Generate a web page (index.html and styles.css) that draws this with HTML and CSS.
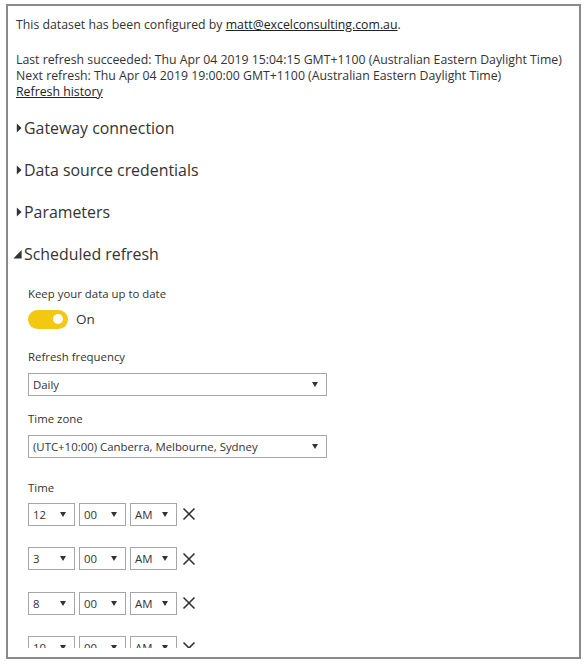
FILE: index.html
```html
<!DOCTYPE html>
<html>
<head>
<meta charset="utf-8">
<link rel="stylesheet" href="styles.css">
</head>
<body>
<div class="frame">
  <div class="scroll">
    <p class="info first">This dataset has been configured by <a class="link">matt@excelconsulting.com.au</a>.</p>
    <p class="info status">Last refresh succeeded: Thu Apr 04 2019 15:04:15 GMT+1100 (Australian Eastern Daylight Time)<br>Next refresh: Thu Apr 04 2019 19:00:00 GMT+1100 (Australian Eastern Daylight Time)<br><a class="link">Refresh history</a></p>

    <div class="sec-head"><svg class="tri" viewBox="0 0 11 10" width="11" height="10"><polygon points="3.8,0.6 8.6,5 3.8,9.4"/></svg><span>Gateway connection</span></div>
    <div class="sec-head"><svg class="tri" viewBox="0 0 11 10" width="11" height="10"><polygon points="3.8,0.6 8.6,5 3.8,9.4"/></svg><span>Data source credentials</span></div>
    <div class="sec-head"><svg class="tri" viewBox="0 0 11 10" width="11" height="10"><polygon points="3.8,0.6 8.6,5 3.8,9.4"/></svg><span>Parameters</span></div>
    <div class="sec-head open"><svg class="tri" viewBox="0 0 11 10" width="11" height="10"><polygon points="8.6,1 8.6,9.4 0.4,9.4"/></svg><span>Scheduled refresh</span></div>

    <div class="sec-body">
      <div class="field f-toggle">
        <div class="label">Keep your data up to date</div>
        <div class="toggle-row"><span class="toggle"><span class="knob"></span></span><span class="toggle-text">On</span></div>
      </div>
      <div class="field f-freq">
        <div class="label">Refresh frequency</div>
        <div class="select wide"><span>Daily</span><svg class="arrow" viewBox="0 0 6 5" width="6" height="5"><polygon points="0,0 6,0 3,5"/></svg></div>
      </div>
      <div class="field f-tz">
        <div class="label">Time zone</div>
        <div class="select wide"><span>(UTC+10:00) Canberra, Melbourne, Sydney</span><svg class="arrow" viewBox="0 0 6 5" width="6" height="5"><polygon points="0,0 6,0 3,5"/></svg></div>
      </div>
      <div class="field f-time">
        <div class="label tight">Time</div>
        <div class="time-row">
          <div class="select small"><span>12</span><svg class="arrow" viewBox="0 0 6 5" width="6" height="5"><polygon points="0,0 6,0 3,5"/></svg></div>
          <div class="select small"><span>00</span><svg class="arrow" viewBox="0 0 6 5" width="6" height="5"><polygon points="0,0 6,0 3,5"/></svg></div>
          <div class="select small"><span>AM</span><svg class="arrow" viewBox="0 0 6 5" width="6" height="5"><polygon points="0,0 6,0 3,5"/></svg></div>
          <svg class="remove" viewBox="0 0 14 14" width="14" height="14"><path d="M1.5 1.5 L12.5 12.5 M12.5 1.5 L1.5 12.5"/></svg>
        </div>
        <div class="time-row">
          <div class="select small"><span>3</span><svg class="arrow" viewBox="0 0 6 5" width="6" height="5"><polygon points="0,0 6,0 3,5"/></svg></div>
          <div class="select small"><span>00</span><svg class="arrow" viewBox="0 0 6 5" width="6" height="5"><polygon points="0,0 6,0 3,5"/></svg></div>
          <div class="select small"><span>AM</span><svg class="arrow" viewBox="0 0 6 5" width="6" height="5"><polygon points="0,0 6,0 3,5"/></svg></div>
          <svg class="remove" viewBox="0 0 14 14" width="14" height="14"><path d="M1.5 1.5 L12.5 12.5 M12.5 1.5 L1.5 12.5"/></svg>
        </div>
        <div class="time-row">
          <div class="select small"><span>8</span><svg class="arrow" viewBox="0 0 6 5" width="6" height="5"><polygon points="0,0 6,0 3,5"/></svg></div>
          <div class="select small"><span>00</span><svg class="arrow" viewBox="0 0 6 5" width="6" height="5"><polygon points="0,0 6,0 3,5"/></svg></div>
          <div class="select small"><span>AM</span><svg class="arrow" viewBox="0 0 6 5" width="6" height="5"><polygon points="0,0 6,0 3,5"/></svg></div>
          <svg class="remove" viewBox="0 0 14 14" width="14" height="14"><path d="M1.5 1.5 L12.5 12.5 M12.5 1.5 L1.5 12.5"/></svg>
        </div>
        <div class="time-row">
          <div class="select small"><span>10</span><svg class="arrow" viewBox="0 0 6 5" width="6" height="5"><polygon points="0,0 6,0 3,5"/></svg></div>
          <div class="select small"><span>00</span><svg class="arrow" viewBox="0 0 6 5" width="6" height="5"><polygon points="0,0 6,0 3,5"/></svg></div>
          <div class="select small"><span>AM</span><svg class="arrow" viewBox="0 0 6 5" width="6" height="5"><polygon points="0,0 6,0 3,5"/></svg></div>
          <svg class="remove" viewBox="0 0 14 14" width="14" height="14"><path d="M1.5 1.5 L12.5 12.5 M12.5 1.5 L1.5 12.5"/></svg>
        </div>
      </div>
    </div>
  </div>
</div>
</body>
</html>
```
FILE: styles.css
```css
html, body {
  margin: 0;
  padding: 0;
  background: #ffffff;
}
body {
  padding: 4px 0 0 6px;
  font-family: "Open Sans", "Noto Sans", sans-serif;
  color: #333333;
}
.frame {
  width: 575px;
  height: 655px;
  box-sizing: border-box;
  border: 2px solid #8a8a8a;
  display: flex;
  flex-direction: column;
  padding-bottom: 9px;
}
.scroll {
  flex: 1;
  overflow: hidden;
  padding: 11px 0 0 8px;
}
.info {
  margin: 0;
  font-size: 12.3px;
  line-height: 16px;
  color: #333333;
}
.info.first {
  margin-bottom: 19px;
}
.info.status {
  margin-bottom: 16.5px;
}
.link {
  color: #222222;
  text-decoration: underline;
}
.sec-head {
  display: flex;
  align-items: center;
  height: 22px;
  margin: 0 0 20px -3px;
  font-size: 15.9px;
  line-height: 22px;
  color: #333333;
}
.sec-head.open {
  margin-bottom: 21px;
}
.tri {
  flex: none;
  fill: #333333;
}
.sec-body {
  padding-left: 12px;
}
.label {
  font-size: 11.4px;
  line-height: 16px;
  margin-bottom: 8px;
}
.label.tight {
  margin-bottom: 7px;
}
.f-toggle { margin-bottom: 20px; }
.f-freq { margin-bottom: 15px; }
.f-tz { margin-bottom: 22px; }
.toggle-row {
  display: flex;
  align-items: center;
  gap: 8px;
  height: 19px;
}
.toggle {
  width: 40px;
  height: 19px;
  border-radius: 10px;
  background: #f2c811;
  display: flex;
  align-items: center;
  justify-content: flex-end;
  padding-right: 5px;
  box-sizing: border-box;
}
.knob {
  width: 10px;
  height: 10px;
  border-radius: 50%;
  background: #ffffff;
}
.toggle-text {
  font-size: 13.5px;
  line-height: 19px;
}
.select {
  height: 23px;
  box-sizing: border-box;
  border: 1px solid #a6a6a6;
  background: #ffffff;
  display: flex;
  align-items: center;
  justify-content: space-between;
  padding: 0 8px 0 4px;
  font-size: 11.4px;
  color: #333333;
}
.select.wide {
  width: 299px;
}
.select.small {
  width: 47px;
  flex: none;
}
.arrow {
  flex: none;
  fill: #333333;
}
.time-row {
  display: flex;
  align-items: center;
  gap: 4px;
  height: 23px;
  margin-bottom: 21.5px;
}
.remove {
  flex: none;
  margin-left: 1px;
  stroke: #333333;
  stroke-width: 1.6;
  fill: none;
}
```
